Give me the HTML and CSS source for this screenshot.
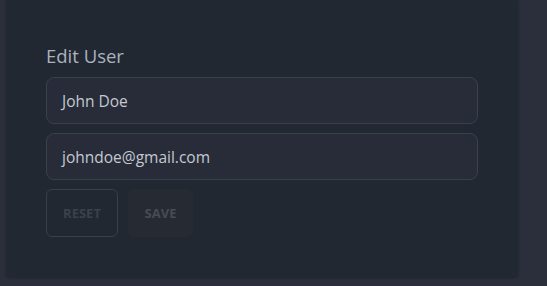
FILE: index.html
```html
<!DOCTYPE html>
<html>
<head>
<meta charset="utf-8">
<link rel="stylesheet" href="styles.css">
</head>
<body>
<div class="card">
  <h2 class="title">Edit User</h2>
  <div class="field"><span>John Doe</span></div>
  <div class="field"><span>johndoe@gmail.com</span></div>
  <div class="actions">
    <button class="btn btn-reset">RESET</button>
    <button class="btn btn-save">SAVE</button>
  </div>
</div>
</body>
</html>
```
FILE: styles.css
```css
html, body {
  margin: 0;
  padding: 0;
  background: #2a2f3b;
  font-family: "Open Sans", "Noto Sans", sans-serif;
}
body {
  width: 547px;
  height: 286px;
  overflow: hidden;
}
.card {
  margin-left: 6px;
  width: 512px;
  height: 277px;
  box-sizing: border-box;
  background: #222831;
  border-radius: 0 0 4px 4px;
  box-shadow: 0 1px 3px rgba(0,0,0,0.25);
  padding: 44px 40px 0 40px;
}
.title {
  margin: 0 0 9px 0;
  font-size: 18.5px;
  font-weight: 400;
  color: #aab2bf;
  line-height: 24px;
}
.field {
  width: 432px;
  height: 47px;
  box-sizing: border-box;
  border: 1px solid #3b404c;
  border-radius: 8px;
  background: #282c38;
  display: flex;
  align-items: center;
  padding-left: 15px;
  color: #c3c9d3;
  font-size: 15.5px;
  margin-bottom: 9px;
}
.actions {
  display: flex;
  gap: 10px;
}
.btn {
  height: 48px;
  box-sizing: border-box;
  border-radius: 6px;
  font-family: "Open Sans", "Noto Sans", sans-serif;
  font-weight: 700;
  font-size: 13px;
  padding: 0;
}
.btn-reset {
  width: 72px;
  border: 1px solid #3a3f4a;
  background: transparent;
  color: #3c414c;
}
.btn-save {
  width: 65px;
  border: none;
  background: #252a33;
  color: #474c57;
}
```
